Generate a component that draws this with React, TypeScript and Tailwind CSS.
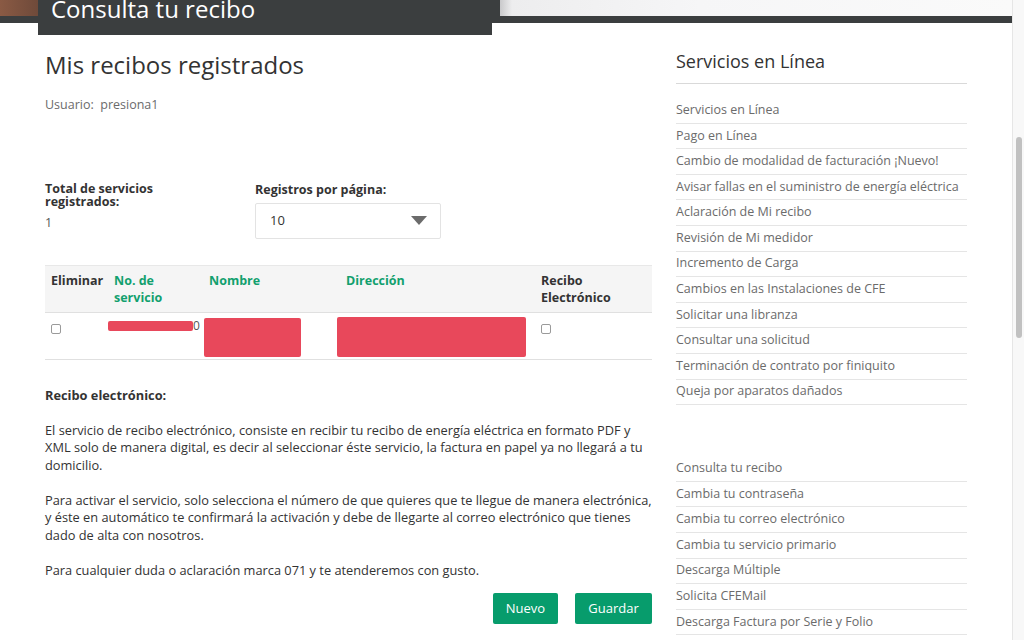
import React from "react";

const servicios = [
  "Servicios en Línea",
  "Pago en Línea",
  "Cambio de modalidad de facturación ¡Nuevo!",
  "Avisar fallas en el suministro de energía eléctrica",
  "Aclaración de Mi recibo",
  "Revisión de Mi medidor",
  "Incremento de Carga",
  "Cambios en las Instalaciones de CFE",
  "Solicitar una libranza",
  "Consultar una solicitud",
  "Terminación de contrato por finiquito",
  "Queja por aparatos dañados",
];

const cuenta = [
  "Consulta tu recibo",
  "Cambia tu contraseña",
  "Cambia tu correo electrónico",
  "Cambia tu servicio primario",
  "Descarga Múltiple",
  "Solicita CFEMail",
  "Descarga Factura por Serie y Folio",
];

function LinkList({ items }: { items: string[] }) {
  return (
    <ul>
      {items.map((item) => (
        <li key={item} className="h-[25.6px] flex items-center border-b border-[#e5e5e5] text-[12.5px] text-[#6b6b6b]">
          {item}
        </li>
      ))}
    </ul>
  );
}

export default function App() {
  return (
    <div className="h-[640px] w-[1024px] flex overflow-hidden bg-white font-['Open_Sans',sans-serif] text-[#333]">
      <div className="flex-1 min-w-0">
        {/* Banner */}
        <div className="relative h-[35px]">
          <div className="h-[16px] bg-[linear-gradient(90deg,#8a5a44_0px,#6f4a3a_38px,#3b3e3f_38px,#3b3e3f_500px,#c9c9cb_500px,#ededee_512px,#f6f6f7_700px,#fafafa_100%)]" />
          <div className="h-[7px] bg-[#3b3e3f]" />
          <div className="absolute left-[38px] top-0 w-[454px] h-[35px] bg-[#3b3e3f] overflow-hidden">
            <div className="absolute left-[13px] top-[-7px] text-[24px] leading-[32px] text-white">Consulta tu recibo</div>
          </div>
        </div>

        <div className="flex pl-[45px]">
          {/* Main column */}
          <div className="w-[607px]">
            <h1 className="mt-[14px] text-[24px] leading-[32px] text-[#333]">Mis recibos registrados</h1>
            <p className="mt-[15px] text-[12.5px] text-[#6b6b6b]">Usuario:&nbsp; presiona1</p>

            <div className="mt-[67px] flex">
              <div className="w-[210px] text-[12.5px]">
                <div className="font-bold leading-[13px] w-[130px]">Total de servicios registrados:</div>
                <div className="mt-[6px] text-[#555]">1</div>
              </div>
              <div className="mt-[1px]">
                <div className="font-bold text-[12.5px] leading-[14px]">Registros por página:</div>
                <div className="mt-[6px] w-[186px] h-[36px] border border-[#e3e3e3] rounded-[2px] flex items-center justify-between pl-[14px] pr-[13px] text-[13px]">
                  <span>10</span>
                  <svg width="16" height="9" viewBox="0 0 16 9"><path d="M0 0h16L8 9z" fill="#6b6b6b" /></svg>
                </div>
              </div>
            </div>

            {/* Table */}
            <div className="mt-[26px] border-t border-[#e8e8e8]">
              <div className="flex h-[47px] bg-[#f5f5f5] border-b border-[#e0e0e0] pt-[6px] text-[12.5px] font-bold leading-[17px]">
                <div className="w-[69px] pl-[6px]">Eliminar</div>
                <div className="w-[95px] text-[#12a06e]">No. de<br />servicio</div>
                <div className="w-[137px] text-[#12a06e]">Nombre</div>
                <div className="w-[195px] text-[#12a06e]">Dirección</div>
                <div>Recibo<br />Electrónico</div>
              </div>
              <div className="flex h-[47px] border-b border-[#e0e0e0]">
                <div className="w-[63px] pl-[6px] pt-[11px]">
                  <div className="w-[10px] h-[10px] border border-[#9a9a9a] rounded-[2px]" />
                </div>
                <div className="w-[96px] pt-[7px] flex items-start">
                  <div className="w-[85px] h-[10px] mt-[1px] bg-[#e8485b] rounded-[2px]" />
                  <span className="text-[12px] leading-[12px] text-[#555]">0</span>
                </div>
                <div className="w-[133px] pt-[5px]">
                  <div className="w-[97px] h-[39px] bg-[#e8485b] rounded-[2px]" />
                </div>
                <div className="w-[204px] pt-[4px]">
                  <div className="w-[189px] h-[40px] bg-[#e8485b] rounded-[2px]" />
                </div>
                <div className="pt-[11px]">
                  <div className="w-[10px] h-[10px] border border-[#9a9a9a] rounded-[2px]" />
                </div>
              </div>
            </div>

            <div className="mt-[27px] text-[12.8px] leading-[17.5px] text-[#333]">
              <p className="font-bold">Recibo electrónico:</p>
              <p className="mt-[17.5px]">
                El servicio de recibo electrónico, consiste en recibir tu recibo de energía eléctrica en formato PDF y XML solo de manera digital, es decir al seleccionar éste servicio, la factura en papel ya no llegará a tu domicilio.
              </p>
              <p className="mt-[17.5px]">
                Para activar el servicio, solo selecciona el número de que quieres que te llegue de manera electrónica, y éste en automático te confirmará la activación y debe de llegarte al correo electrónico que tienes dado de alta con nosotros.
              </p>
              <p className="mt-[17.5px]">Para cualquier duda o aclaración marca 071 y te atenderemos con gusto.</p>
            </div>

            <div className="mt-[14px] flex justify-end gap-[17px]">
              <button className="w-[65px] h-[31px] bg-[#079c6c] text-white text-[13px] rounded-[2px]">Nuevo</button>
              <button className="w-[77px] h-[31px] bg-[#079c6c] text-white text-[13px] rounded-[2px]">Guardar</button>
            </div>
          </div>

          {/* Sidebar */}
          <div className="ml-[24px] w-[291px]">
            <h2 className="mt-[14px] text-[18px] leading-[24px] text-[#333] pb-[10px] border-b border-[#d9d9d9]">Servicios en Línea</h2>
            <div className="mt-[14px]">
              <LinkList items={servicios} />
            </div>
            <div className="mt-[51px]">
              <LinkList items={cuenta} />
            </div>
          </div>
        </div>
      </div>

      {/* Scrollbar */}
      <div className="w-[12px] shrink-0 bg-[#f8f8f8] border-l border-[#e6e6e6] pt-[137px]">
        <div className="mx-auto w-[6px] h-[201px] rounded-full bg-[#c1c1c1]" />
      </div>
    </div>
  );
}
